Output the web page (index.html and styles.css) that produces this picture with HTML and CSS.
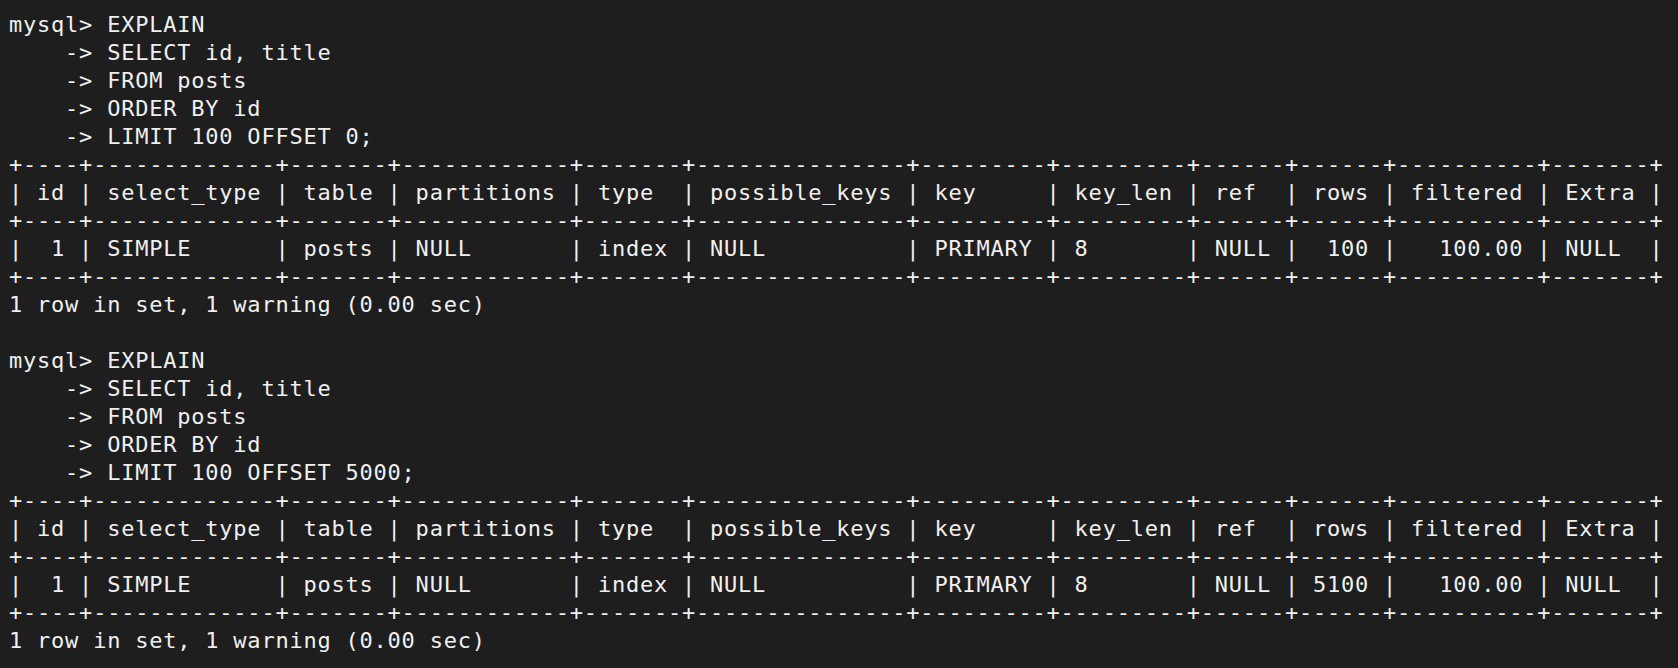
FILE: index.html
```html
<!DOCTYPE html>
<html>
<head>
<meta charset="utf-8">
<link rel="stylesheet" href="styles.css">
</head>
<body class="term">
<pre class="screen">mysql&gt; EXPLAIN
    -&gt; SELECT id, title
    -&gt; FROM posts
    -&gt; ORDER BY id
    -&gt; LIMIT 100 OFFSET 0;
+----+-------------+-------+------------+-------+---------------+---------+---------+------+------+----------+-------+
| id | select_type | table | partitions | type  | possible_keys | key     | key_len | ref  | rows | filtered | Extra |
+----+-------------+-------+------------+-------+---------------+---------+---------+------+------+----------+-------+
|  1 | SIMPLE      | posts | NULL       | index | NULL          | PRIMARY | 8       | NULL |  100 |   100.00 | NULL  |
+----+-------------+-------+------------+-------+---------------+---------+---------+------+------+----------+-------+
1 row in set, 1 warning (0.00 sec)

mysql&gt; EXPLAIN
    -&gt; SELECT id, title
    -&gt; FROM posts
    -&gt; ORDER BY id
    -&gt; LIMIT 100 OFFSET 5000;
+----+-------------+-------+------------+-------+---------------+---------+---------+------+------+----------+-------+
| id | select_type | table | partitions | type  | possible_keys | key     | key_len | ref  | rows | filtered | Extra |
+----+-------------+-------+------------+-------+---------------+---------+---------+------+------+----------+-------+
|  1 | SIMPLE      | posts | NULL       | index | NULL          | PRIMARY | 8       | NULL | 5100 |   100.00 | NULL  |
+----+-------------+-------+------------+-------+---------------+---------+---------+------+------+----------+-------+
1 row in set, 1 warning (0.00 sec)</pre>
</body>
</html>
```
FILE: styles.css
```css
html, body {
  margin: 0;
  padding: 0;
  background: #1e1e1e;
}
.term {
  width: 1678px;
  height: 668px;
  overflow: hidden;
}
.screen {
  margin: 0;
  padding: 11px 0 0 9px;
  font-family: "DejaVu Sans Mono", "Liberation Mono", monospace;
  font-size: 22px;
  letter-spacing: 0.776px;
  line-height: 28px;
  color: #f0f0f0;
  white-space: pre;
}
```
